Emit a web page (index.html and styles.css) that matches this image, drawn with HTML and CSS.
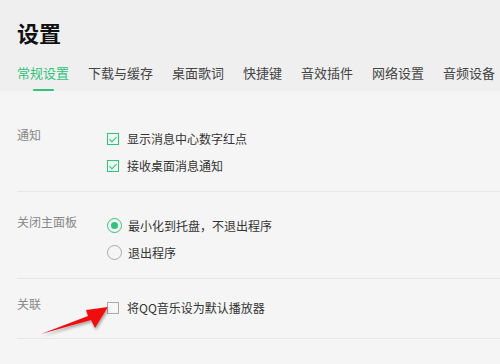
FILE: index.html
```html
<!DOCTYPE html>
<html lang="zh-CN">
<head>
    <meta charset="UTF-8">
    <title>设置</title>
    <link rel="stylesheet" href="styles.css">
</head>
<body>

<div class="header">
    <h1>设置</h1>
    <div class="tabs">
        <div class="tab active">常规设置</div>
        <div class="tab">下载与缓存</div>
        <div class="tab">桌面歌词</div>
        <div class="tab">快捷键</div>
        <div class="tab">音效插件</div>
        <div class="tab">网络设置</div>
        <div class="tab">音频设备</div>
    </div>
</div>

<div class="content">
    <div class="section">
        <div class="label">通知</div>
        <div class="options">
            <div class="option"><span class="check checked"></span>显示消息中心数字红点</div>
            <div class="option"><span class="check checked"></span>接收桌面消息通知</div>
        </div>
    </div>

    <div class="section">
        <div class="label">关闭主面板</div>
        <div class="options">
            <div class="option"><span class="radio checked"></span>最小化到托盘，不退出程序</div>
            <div class="option"><span class="radio"></span>退出程序</div>
        </div>
    </div>

    <div class="section section-link">
        <div class="label">关联</div>
        <div class="options">
            <div class="option"><span class="check"></span>将QQ音乐设为默认播放器</div>
        </div>
    </div>
</div>

<!-- annotation arrow pointing at the checkbox -->
<svg class="arrow" width="500" height="364" viewBox="0 0 500 364">
    <defs>
        <filter id="shadow" x="-20%" y="-20%" width="140%" height="140%">
            <feDropShadow dx="1" dy="2" stdDeviation="1.5" flood-color="#000" flood-opacity="0.35"/>
        </filter>
    </defs>
    <polygon points="41,334 88,316 86,310 108,307 95,328 91,320" fill="#f01010" filter="url(#shadow)"/>
</svg>

</body>
</html>
```

FILE: styles.css
```css
* {
    box-sizing: border-box;
}
body {
    margin: 0;
    width: 500px;
    height: 364px;
    overflow: hidden;
    background: #f5f5f5;
    font-family: "Microsoft YaHei", "Noto Sans CJK SC", sans-serif;
    color: #333;
}
.header {
    background: #efefef;
    padding: 17px 0 0 17px;
}
.header h1 {
    margin: 0;
    font-size: 22px;
    line-height: 30px;
    font-weight: bold;
    color: #111;
}
.tabs {
    display: flex;
    gap: 19px;
    margin-top: 16px;
    white-space: nowrap;
}
.tab {
    display: flex;
    flex-direction: column;
    align-items: center;
    font-size: 13px;
    line-height: 20px;
    color: #444;
}
.tab::after {
    content: "";
    width: 21px;
    height: 2px;
    margin-top: 6px;
    border-radius: 1px;
}
.tab.active {
    color: #31c27c;
}
.tab.active::after {
    background: #31c27c;
}
.content {
    padding: 14px 0 0 17px;
}
.section {
    display: flex;
    align-items: flex-start;
    padding: 20px 0 12px;
    border-bottom: 1px solid #e6e6e6;
}
.section-link {
    padding: 15px 0 17px;
}
.label {
    width: 90px;
    font-size: 12px;
    line-height: 19px;
    color: #888;
}
.option {
    display: flex;
    align-items: center;
    height: 27px;
    font-size: 12px;
    color: #333;
}
.check {
    width: 12px;
    height: 12px;
    margin-right: 8px;
    border: 1px solid #aaa;
    background: #f7f7f7;
    position: relative;
}
.check.checked {
    border-color: #31c27c;
    background: #eaf8f1;
}
.check.checked::after {
    content: "";
    position: absolute;
    left: 3px;
    top: 1px;
    width: 3px;
    height: 6px;
    border: solid #31c27c;
    border-width: 0 1.5px 1.5px 0;
    transform: rotate(45deg);
}
.radio {
    width: 15px;
    height: 15px;
    margin-right: 6px;
    border: 1px solid #aaa;
    border-radius: 50%;
    display: flex;
    align-items: center;
    justify-content: center;
}
.radio.checked {
    border-color: #31c27c;
}
.radio.checked::after {
    content: "";
    width: 7px;
    height: 7px;
    border-radius: 50%;
    background: #31c27c;
}
.arrow {
    position: absolute;
    left: 0;
    top: 0;
    pointer-events: none;
}
```
